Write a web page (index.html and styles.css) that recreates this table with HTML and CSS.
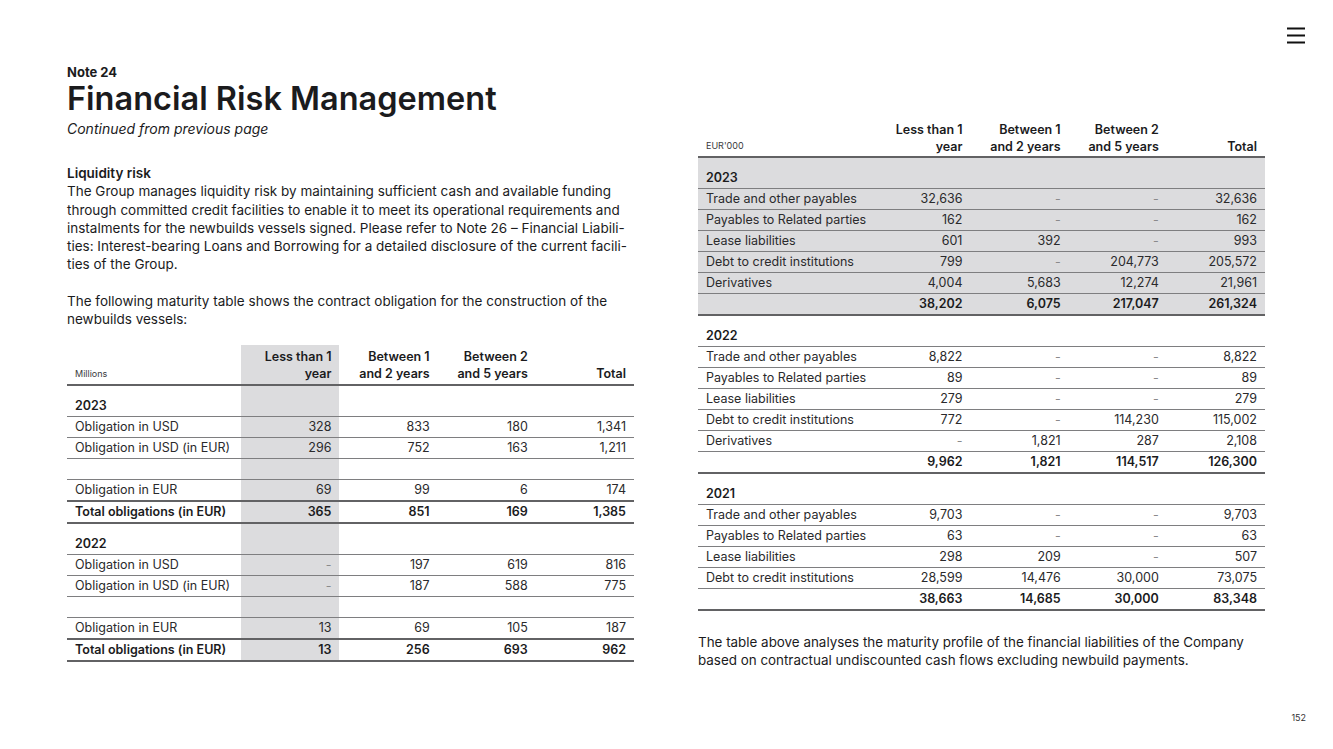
FILE: index.html
```html
<!DOCTYPE html>
<html lang="en">
<head>
<meta charset="utf-8">
<title>Note 24 – Financial Risk Management</title>
<link rel="stylesheet" href="styles.css">
</head>
<body>
<div class="page">
  <button class="menu" aria-label="Menu">
    <svg width="18" height="17" viewBox="0 0 18 17"><path d="M0 1.5H18M0 8.5H18M0 15.5H18" stroke="#111" stroke-width="1.8" fill="none"/></svg>
  </button>

  <div class="columns">
    <section class="col left">
      <div class="note">Note 24</div>
      <h1 class="title">Financial Risk Management</h1>
      <div class="cont">Continued from previous page</div>

      <div class="text">
        <div class="subhead">Liquidity risk</div>
        <p>The Group manages liquidity risk by maintaining sufficient cash and available funding<br>through committed credit facilities to enable it to meet its operational requirements and<br>instalments for the newbuilds vessels signed. Please refer to Note 26 – Financial Liabili-<br>ties: Interest-bearing Loans and Borrowing for a detailed disclosure of the current facili-<br>ties of the Group.</p>
        <p class="gap">The following maturity table shows the contract obligation for the construction of the<br>newbuilds vessels:</p>
      </div>

      <table class="tbl tbl-left">
        <colgroup><col class="c-label"><col class="c-num"><col class="c-num"><col class="c-num"><col class="c-num"></colgroup>
        <thead>
          <tr>
            <th class="unit">Millions</th>
            <th class="shade">Less than 1<br>year</th>
            <th>Between 1<br>and 2 years</th>
            <th>Between 2<br>and 5 years</th>
            <th>Total</th>
          </tr>
        </thead>
        <tbody>
          <tr class="sec"><td>2023</td><td class="shade"></td><td></td><td></td><td></td></tr>
          <tr><td>Obligation in USD</td><td class="shade">328</td><td>833</td><td>180</td><td>1,341</td></tr>
          <tr><td>Obligation in USD (in EUR)</td><td class="shade">296</td><td>752</td><td>163</td><td>1,211</td></tr>
          <tr><td>&nbsp;</td><td class="shade"></td><td></td><td></td><td></td></tr>
          <tr class="pre-total"><td>Obligation in EUR</td><td class="shade">69</td><td>99</td><td>6</td><td>174</td></tr>
          <tr class="total"><td>Total obligations (in EUR)</td><td class="shade">365</td><td>851</td><td>169</td><td>1,385</td></tr>
          <tr class="sec"><td>2022</td><td class="shade"></td><td></td><td></td><td></td></tr>
          <tr><td>Obligation in USD</td><td class="shade dash">-</td><td>197</td><td>619</td><td>816</td></tr>
          <tr><td>Obligation in USD (in EUR)</td><td class="shade dash">-</td><td>187</td><td>588</td><td>775</td></tr>
          <tr><td>&nbsp;</td><td class="shade"></td><td></td><td></td><td></td></tr>
          <tr class="pre-total"><td>Obligation in EUR</td><td class="shade">13</td><td>69</td><td>105</td><td>187</td></tr>
          <tr class="total"><td>Total obligations (in EUR)</td><td class="shade">13</td><td>256</td><td>693</td><td>962</td></tr>
        </tbody>
      </table>
    </section>

    <section class="col right">
      <table class="tbl tbl-right">
        <colgroup><col class="c-label"><col class="c-num"><col class="c-num"><col class="c-num"><col class="c-num"></colgroup>
        <thead>
          <tr>
            <th class="unit">EUR'000</th>
            <th>Less than 1<br>year</th>
            <th>Between 1<br>and 2 years</th>
            <th>Between 2<br>and 5 years</th>
            <th>Total</th>
          </tr>
        </thead>
        <tbody class="shaded">
          <tr class="sec"><td>2023</td><td></td><td></td><td></td><td></td></tr>
          <tr><td>Trade and other payables</td><td>32,636</td><td class="dash">-</td><td class="dash">-</td><td>32,636</td></tr>
          <tr><td>Payables to Related parties</td><td>162</td><td class="dash">-</td><td class="dash">-</td><td>162</td></tr>
          <tr><td>Lease liabilities</td><td>601</td><td>392</td><td class="dash">-</td><td>993</td></tr>
          <tr><td>Debt to credit institutions</td><td>799</td><td class="dash">-</td><td>204,773</td><td>205,572</td></tr>
          <tr><td>Derivatives</td><td>4,004</td><td>5,683</td><td>12,274</td><td>21,961</td></tr>
          <tr class="total"><td></td><td>38,202</td><td>6,075</td><td>217,047</td><td>261,324</td></tr>
        </tbody>
        <tbody>
          <tr class="sec"><td>2022</td><td></td><td></td><td></td><td></td></tr>
          <tr><td>Trade and other payables</td><td>8,822</td><td class="dash">-</td><td class="dash">-</td><td>8,822</td></tr>
          <tr><td>Payables to Related parties</td><td>89</td><td class="dash">-</td><td class="dash">-</td><td>89</td></tr>
          <tr><td>Lease liabilities</td><td>279</td><td class="dash">-</td><td class="dash">-</td><td>279</td></tr>
          <tr><td>Debt to credit institutions</td><td>772</td><td class="dash">-</td><td>114,230</td><td>115,002</td></tr>
          <tr><td>Derivatives</td><td class="dash">-</td><td>1,821</td><td>287</td><td>2,108</td></tr>
          <tr class="total"><td></td><td>9,962</td><td>1,821</td><td>114,517</td><td>126,300</td></tr>
        </tbody>
        <tbody>
          <tr class="sec"><td>2021</td><td></td><td></td><td></td><td></td></tr>
          <tr><td>Trade and other payables</td><td>9,703</td><td class="dash">-</td><td class="dash">-</td><td>9,703</td></tr>
          <tr><td>Payables to Related parties</td><td>63</td><td class="dash">-</td><td class="dash">-</td><td>63</td></tr>
          <tr><td>Lease liabilities</td><td>298</td><td>209</td><td class="dash">-</td><td>507</td></tr>
          <tr><td>Debt to credit institutions</td><td>28,599</td><td>14,476</td><td>30,000</td><td>73,075</td></tr>
          <tr class="total"><td></td><td>38,663</td><td>14,685</td><td>30,000</td><td>83,348</td></tr>
        </tbody>
      </table>
      <p class="after">The table above analyses the maturity profile of the financial liabilities of the Company<br>based on contractual undiscounted cash flows excluding newbuild payments.</p>
    </section>
  </div>

  <footer class="footer">152</footer>
</div>
</body>
</html>
```

FILE: styles.css
```css
* { box-sizing: border-box; }

html, body {
  margin: 0;
  padding: 0;
  background: #fff;
}

body {
  font-family: Inter, "Noto Sans", "Liberation Sans", sans-serif;
  color: #1b1b1d;
}

.page {
  position: relative;
  width: 1333px;
  min-height: 749px;
  display: flex;
  flex-direction: column;
}

.menu {
  position: absolute;
  top: 27px;
  right: 28px;
  padding: 0;
  margin: 0;
  border: 0;
  background: none;
  width: 18px;
  height: 17px;
  display: block;
}
.menu svg { display: block; }

.columns {
  display: flex;
  gap: 64px;
  padding: 64px 0 0 67px;
}

.col { width: 567px; }

.note {
  font-size: 13px;
  font-weight: 700;
  line-height: 16px;
}

.title {
  margin: 0;
  font-size: 32.5px;
  font-weight: 600;
  line-height: 38px;
  letter-spacing: 0;
}

.cont {
  margin-top: 2px;
  font-size: 14px;
  font-style: italic;
  line-height: 18px;
}

.text {
  margin-top: 26px;
  font-size: 13.5px;
  line-height: 18.25px;
  white-space: nowrap;
}
.subhead { font-weight: 600; }
.text p { margin: 0; }
.text p.gap { margin-top: 18.25px; }

.tbl {
  width: 567px;
  table-layout: fixed;
  border-collapse: separate;
  border-spacing: 0;
  font-size: 12.5px;
  color: #2a2a2c;
}
.c-label { width: 174px; }
.c-num { width: 98px; }

.tbl-left { margin-top: 17px; }
.tbl-right { margin-top: 57px; }

.tbl th {
  font-weight: 600;
  text-align: right;
  vertical-align: bottom;
  line-height: 17px;
  padding: 3px 8px 2px;
  border-bottom: 2px solid #626264;
  color: #1b1b1d;
}
.tbl-right th { padding-top: 0; padding-bottom: 1px; }

.tbl th.unit {
  text-align: left;
  font-size: 9px;
  font-weight: 400;
  line-height: 12px;
  padding-bottom: 4px;
  color: #3a3a3c;
}

.tbl td {
  text-align: right;
  line-height: 16px;
  padding: 2px 8px;
  border-bottom: 1px solid #7e7e80;
  white-space: nowrap;
}
.tbl td:first-child { text-align: left; }

.tbl tr.sec td {
  padding-top: 12px;
  font-weight: 600;
  color: #1b1b1d;
}

.tbl tr.total td {
  font-weight: 600;
  color: #1b1b1d;
  border-bottom: 2px solid #626264;
}
.tbl tr.pre-total td { border-bottom: 2px solid #626264; }

.tbl td.dash { color: #8a8a8c; }

.shade { background: #dcdcde; }
.shaded td { background: #dcdcde; }

.after {
  margin: 22px 0 0;
  font-size: 13.4px;
  line-height: 18px;
  white-space: nowrap;
}

.footer {
  margin-top: auto;
  padding: 0 27px 26px 0;
  text-align: right;
  font-size: 9px;
  line-height: 10px;
  color: #333;
}
```
